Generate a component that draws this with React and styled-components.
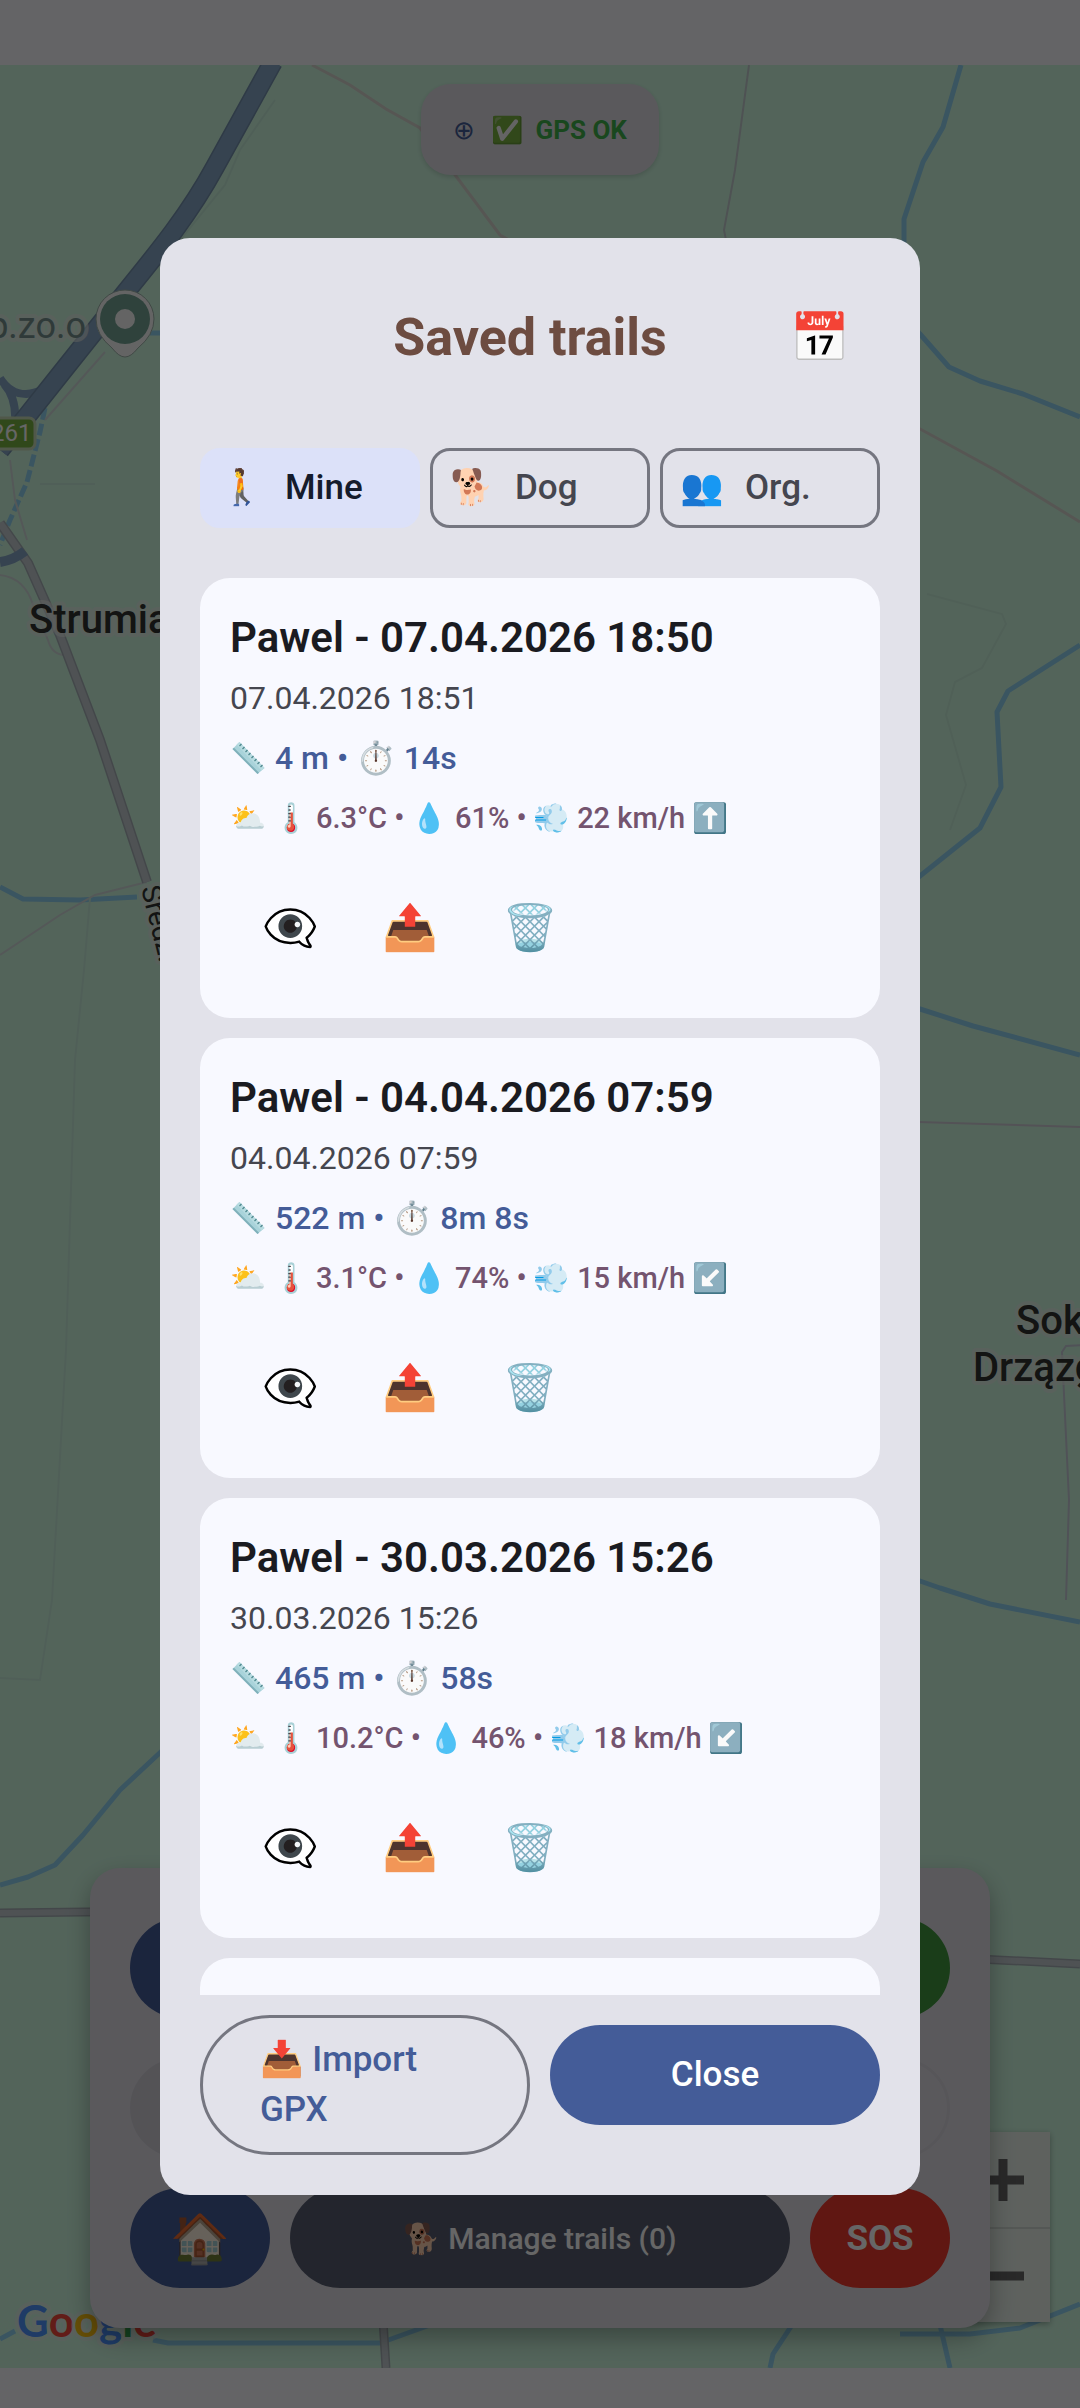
import styled, { createGlobalStyle } from "styled-components";
import { useState } from "react";

const FILTERS = [
  { id: "mine", icon: "🚶", label: "Mine" },
  { id: "dog", icon: "🐕", label: "Dog" },
  { id: "org", icon: "👥", label: "Org." },
];

const TRAILS = [
  {
    name: "Pawel - 07.04.2026 18:50",
    date: "07.04.2026 18:51",
    distance: "4 m",
    time: "14s",
    temp: "6.3°C",
    humidity: "61%",
    wind: "22 km/h",
    arrow: "⬆️",
  },
  {
    name: "Pawel - 04.04.2026 07:59",
    date: "04.04.2026 07:59",
    distance: "522 m",
    time: "8m 8s",
    temp: "3.1°C",
    humidity: "74%",
    wind: "15 km/h",
    arrow: "↙️",
  },
  {
    name: "Pawel - 30.03.2026 15:26",
    date: "30.03.2026 15:26",
    distance: "465 m",
    time: "58s",
    temp: "10.2°C",
    humidity: "46%",
    wind: "18 km/h",
    arrow: "↙️",
  },
];

function App() {
  const [filter, setFilter] = useState("mine");

  return (
    <Screen>
      <GlobalStyle />

      <Background inert>
        <MapArea>
          <MapDrawing />
          <ZoomControl>
            <ZoomButton><ZoomSign /></ZoomButton>
            <ZoomButton><ZoomSign minus /></ZoomButton>
          </ZoomControl>
          <GpsPill>
            <GpsTarget>⊕</GpsTarget>
            <span>✅</span>
            <span>GPS OK</span>
          </GpsPill>
          <ControlPanel>
            <ControlRow $first>
              <ControlButton $grow $bg="#445c98" />
              <ControlButton $grow $bg="#41983f" />
            </ControlRow>
            <ControlRow>
              <ControlButton $grow $bg="#d2d0d8" />
              <ControlButton $grow $bg="transparent" $line="#d9d7df" />
            </ControlRow>
            <ControlRow>
              <ControlButton $bg="#445c98" $size="48px">🏠</ControlButton>
              <ControlButton $grow $bg="#585e71">🐕 Manage trails (0)</ControlButton>
              <ControlButton $bg="#f03a2e" $size="35px" $bold>SOS</ControlButton>
            </ControlRow>
          </ControlPanel>
        </MapArea>
      </Background>

      <Scrim>
        <Dialog role="dialog" aria-labelledby="saved-title">
          <Header>
            <HeaderSpacer />
            <Title id="saved-title">Saved trails</Title>
            <IconButton $size="48px">📅</IconButton>
          </Header>

          <Filters>
            {FILTERS.map((f) => (
              <Chip
                key={f.id}
                type="button"
                aria-pressed={filter === f.id}
                $selected={filter === f.id}
                onClick={() => setFilter(f.id)}
              >
                <ChipIcon>{f.icon}</ChipIcon>
                {f.label}
              </Chip>
            ))}
          </Filters>

          <TrailList>
            {TRAILS.map((t) => (
              <TrailCard key={t.name}>
                <TrailName>{t.name}</TrailName>
                <TrailDate>{t.date}</TrailDate>
                <TrailStats>
                  <Ruler /> {t.distance} • ⏱️ {t.time}
                </TrailStats>
                <TrailWeather>
                  <WeatherIcon>⛅</WeatherIcon>
                  <WeatherIcon>🌡️</WeatherIcon>
                  {t.temp} • 💧 {t.humidity} • 💨 {t.wind} {t.arrow}
                </TrailWeather>
                <Actions>
                  <IconButton>👁️‍🗨️</IconButton>
                  <IconButton>📤</IconButton>
                  <IconButton>🗑️</IconButton>
                </Actions>
              </TrailCard>
            ))}
            <TrailCard />
          </TrailList>

          <Footer>
            <ImportButton>📥 Import GPX</ImportButton>
            <CloseButton>Close</CloseButton>
          </Footer>
        </Dialog>
      </Scrim>
    </Screen>
  );
}

// pale glass ruler, lies from top left to bottom right
function Ruler() {
  return (
    <RulerSvg viewBox="0 0 34 34" aria-hidden="true">
      <path d="M8 1 L33 27 L26 33 L1 8 Z" fill="#a9d3da" />
      <path d="M8 1 L33 27 L30 29.5 L5 3.5 Z" fill="#b8dce1" />
      <path d="M1 8 L26 33 L27.5 31.8 L2.5 6.8 Z" fill="#7fb0ba" />
      <path
        d="M10 3 l-2 2 M13 6 l-2 2 M16 9 l-2 2 M19 12 l-2 2 M22 15 l-2 2 M25 18 l-2 2 M28 21 l-2 2 M31 24 l-2 2"
        stroke="#4a858c"
        strokeWidth="1.2"
      />
    </RulerSvg>
  );
}

function ZoomSign({ minus }) {
  return (
    <svg width="42" height="42" viewBox="0 0 42 42" aria-hidden="true">
      <path d={minus ? "M0 21 H42" : "M0 21 H42 M21 0 V42"} stroke="#666" strokeWidth="9" />
    </svg>
  );
}

function MapDrawing() {
  return (
    <MapSvg viewBox="0 65 1080 2303" preserveAspectRatio="xMidYMid slice">
      <rect x="0" y="65" width="1080" height="2303" fill="#d0fae2" />

      <g fill="none" stroke="#92d4f2" strokeWidth="5" strokeLinejoin="round">
        <path d="M961 65 L943 127 L923 162 L904 219 V245" />
        <path d="M900 310 L920 334 L949 367 L980 381 L1023 394 L1080 417" />
        <path d="M1080 645 L1008 691 L997 712 L1001 787 L980 828 L910 884" />
        <path d="M900 1004 L920 1009 L973 1026 L1080 1055" />
        <path d="M900 1574 L940 1588 L990 1604 L1080 1622" />
        <path d="M0 887 L23 899 L80 900 L137 897" />
        <path d="M45 408 L40 432 L27 482 L10 520 L0 545" strokeDasharray="12 4" />
        <path d="M150 333 H165" />
        <path d="M0 1885 L28 1877 L55 1865 L83 1835 L120 1790 L165 1748" />
        <path d="M0 2339 L15 2331" />
        <path d="M153 2340 L168 2343 H380 L430 2325" />
        <path d="M792 2325 L773 2354 L770 2368" />
        <path d="M940 2325 L950 2368" />
        <path d="M900 2334 H970 L1020 2328 L1080 2304" />
      </g>

      <g fill="none" stroke="#d2dcdc" strokeWidth="2">
        <path d="M312 65 L350 85 L386 109 L420 128 L500 235 L600 290" stroke="#d8d6d0" strokeWidth="3" />
        <path d="M900 418 L997 471 L1080 522" stroke="#d8d6d0" strokeWidth="3" />
        <path d="M749 65 L735 170 L724 230 L727 245" stroke="#c4ccd0" />
        <path d="M918 1122 L1080 1127" stroke="#cfcdd6" />
        <path d="M1085 1345 L1066 1346 L1062 1352 L1069 1500 L1066 1600" stroke="#c9ccda" />
        <path d="M0 955 L60 915 L95 895 L147 882" />
        <path d="M0 575 Q25 578 33 605 L48 640 Q52 655 65 655" />
        <path d="M105 352 L45 420" />
        <path d="M275 100 L240 150 L225 185 L180 240" stroke="#c6eeda" />
        <path d="M90 898 L84 970 L75 1060 L66 1350 L52 1600 L40 1680 L0 1678" stroke="#c8eedc" />
        <path d="M927 594 L1002 614 L1006 624 L982 668 L955 682 L946 715 L966 785 L950 830" stroke="#c8f0da" />
        <path d="M10 460 L15 500 L27 540" />
        <path d="M40 484 H95" stroke="#c8eedc" />
      </g>

      <g fill="none" strokeLinejoin="round">
        <path d="M0 523 L28 563 L60 635 L100 740 L147 882" stroke="#a9b2b8" strokeWidth="10" />
        <path d="M0 523 L28 563 L60 635 L100 740 L147 882" stroke="#c5ced3" strokeWidth="7" />
        <path d="M0 1913 L170 1911" stroke="#a9b2b8" strokeWidth="9" />
        <path d="M0 1913 L170 1911" stroke="#c5ced3" strokeWidth="6" />
        <path d="M900 1955 L1080 1964" stroke="#a9b2b8" strokeWidth="9" />
        <path d="M900 1955 L1080 1964" stroke="#c5ced3" strokeWidth="6" />
        <path d="M383 2320 L386 2368" stroke="#a9b2b8" strokeWidth="9" />
        <path d="M383 2320 L386 2368" stroke="#c5ced3" strokeWidth="6" />
        <path d="M0 378 Q10 394 26 394 Q45 393 58 376 M4 384 Q17 398 15 425" stroke="#87a8c8" strokeWidth="8" />
        <path d="M0 562 Q14 560 25 551" stroke="#87a8c8" strokeWidth="10" />
        <path
          d="M273 62 L215 167 C190 213 160 250 125 293 L62 372 L0 450"
          stroke="#7592ae"
          strokeWidth="20"
        />
        <path
          d="M273 62 L215 167 C190 213 160 250 125 293 L62 372 L0 450"
          stroke="#87a8c8"
          strokeWidth="17"
        />
      </g>

      <PlaceLabel x="86" y="338" textAnchor="end" $size="36px" $color="#75928f" $weight="400">
        p.zo.o
      </PlaceLabel>
      <path
        d="M125 357 Q119 357 112 348 Q96 335 96 319 A29 29 0 0 1 154 319 Q154 335 138 348 Q131 357 125 357 Z"
        fill="#fbfbfb"
        stroke="#9fb5ab"
        strokeWidth="1"
      />
      <circle cx="125" cy="319" r="25" fill="#75a596" />
      <circle cx="125" cy="319" r="10" fill="#fbfbfb" />

      <rect x="-20" y="418" width="55" height="31" rx="6" fill="#78b441" stroke="#c9dcb9" strokeWidth="3" />
      <BadgeText x="-9" y="441">261</BadgeText>

      <PlaceLabel x="29" y="633" $size="40px">Strumia</PlaceLabel>
      <PlaceLabel transform="translate(141 888) rotate(76)" $size="28px" $weight="400">
        Średz.
      </PlaceLabel>
      <PlaceLabel x="1016" y="1334" $size="40px">Sok</PlaceLabel>
      <PlaceLabel x="973" y="1381" $size="40px">Drzązg</PlaceLabel>

      <LogoText x="17" y="2337">
        <tspan fill="#4e94ff">G</tspan>
        <tspan fill="#f4483c">o</tspan>
        <tspan fill="#fbc010">o</tspan>
        <tspan fill="#4e94ff">g</tspan>
        <tspan fill="#34a853">l</tspan>
        <tspan fill="#f4483c">e</tspan>
      </LogoText>
    </MapSvg>
  );
}

const GlobalStyle = createGlobalStyle`
  * {
    box-sizing: border-box;
  }
  body {
    margin: 0;
    font-family: Roboto, "Noto Color Emoji", sans-serif;
    background-color: #fafaff;
  }
  button {
    font-family: inherit;
    border: none;
    margin: 0;
    padding: 0;
    cursor: pointer;
  }
`;

const Screen = styled.div`
  height: 100vh;
  overflow: hidden;
`;

const Background = styled.div`
  height: 100%;
  padding: 65px 0 40px;
  background-color: #fafaff;
`;

const MapArea = styled.main`
  position: relative;
  height: 100%;
  overflow: hidden;
  display: flex;
  flex-direction: column;
  justify-content: space-between;
  align-items: center;
  padding: 19px 90px 40px;
`;

const MapSvg = styled.svg`
  position: absolute;
  inset: 0;
  width: 100%;
  height: 100%;
`;

const PlaceLabel = styled.text`
  font-family: Roboto, sans-serif;
  font-size: ${(p) => p.$size};
  font-weight: ${(p) => p.$weight || 500};
  fill: ${(p) => p.$color || "#303330"};
  stroke: #e8eeea;
  stroke-width: 8px;
  stroke-linejoin: round;
  stroke-opacity: 0.6;
  paint-order: stroke;
`;

const BadgeText = styled.text`
  font-family: Roboto, sans-serif;
  font-size: 24px;
  fill: #fff;
`;

const LogoText = styled.text`
  font-family: Lato, sans-serif;
  font-size: 44px;
  font-weight: 700;
  stroke: #e6efe9;
  stroke-width: 8px;
  stroke-linejoin: round;
  stroke-opacity: 0.6;
  paint-order: stroke;
`;

const GpsPill = styled.div`
  position: relative;
  display: flex;
  align-items: center;
  gap: 12px;
  height: 91px;
  padding: 0 32px;
  border-radius: 30px;
  background-color: #e1dfe7;
  box-shadow: 0 2px 5px rgba(0, 0, 0, 0.15);
  color: #3fb24b;
  font-size: 26px;
  font-weight: 700;
`;

const GpsTarget = styled.span`
  color: #445c98;
  font-weight: 400;
  margin-right: 4px;
`;

const ZoomControl = styled.div`
  position: absolute;
  right: 30px;
  bottom: 46px;
  display: flex;
  flex-direction: column;
  box-shadow: 0 2px 6px rgba(0, 0, 0, 0.3);
`;

const ZoomButton = styled.button`
  display: flex;
  justify-content: center;
  align-items: center;
  width: 95px;
  height: 95px;
  background-color: #eaf3ec;

  & + & {
    border-top: 2px solid #d2dad4;
  }
`;

const ControlPanel = styled.section`
  position: relative;
  width: 100%;
  display: flex;
  flex-direction: column;
  gap: 30px;
  padding: 50px 40px 40px;
  border-radius: 30px;
  background-color: #e1dfe7;
  box-shadow: 0 10px 24px rgba(0, 0, 0, 0.3);
`;

const ControlRow = styled.div`
  display: flex;
  gap: 20px;
  margin-bottom: ${(p) => (p.$first ? "10px" : "0")};
`;

const ControlButton = styled.button`
  flex: ${(p) => (p.$grow ? "1" : "0 0 140px")};
  height: 100px;
  border-radius: 50px;
  border: ${(p) => (p.$line ? `3px solid ${p.$line}` : "none")};
  background-color: ${(p) => p.$bg};
  color: #fff;
  font-size: ${(p) => p.$size || "30px"};
  font-weight: ${(p) => (p.$bold ? 700 : 500)};
`;

const Scrim = styled.div`
  position: fixed;
  inset: 0;
  display: flex;
  justify-content: center;
  align-items: center;
  padding: 65px 160px 40px;
  background-color: rgba(0, 0, 0, 0.6);
`;

const Dialog = styled.div`
  display: flex;
  flex-direction: column;
  width: 100%;
  max-height: 85%;
  padding: 40px;
  border-radius: 30px;
  background-color: #e2e2ea;
`;

const Header = styled.header`
  display: flex;
  justify-content: space-between;
  align-items: center;
  margin-bottom: 50px;
`;

const HeaderSpacer = styled.div`
  width: 100px;
`;

const Title = styled.h2`
  margin: 0;
  color: #6d4c41;
  font-size: 52px;
  font-weight: 700;
`;

const IconButton = styled.button`
  width: 120px;
  height: 120px;
  background: none;
  font-size: ${(p) => p.$size || "45px"};
  color: #1a1b21;
`;

const Filters = styled.div`
  display: flex;
  gap: 10px;
  margin-bottom: 50px;
`;

const Chip = styled.button`
  flex: 1;
  display: flex;
  align-items: center;
  gap: 20px;
  height: 80px;
  padding: 0 17px;
  border: 3px solid ${(p) => (p.$selected ? "#dce1f9" : "#757680")};
  border-radius: 20px;
  background-color: ${(p) => (p.$selected ? "#dce1f9" : "transparent")};
  color: ${(p) => (p.$selected ? "#151b2c" : "#45464f")};
  font-size: 35px;
  font-weight: 500;
`;

const ChipIcon = styled.span`
  width: 45px;
`;

const TrailList = styled.ul`
  flex: 1;
  min-height: 0;
  overflow-y: auto;
  scrollbar-width: none;
  display: flex;
  flex-direction: column;
  gap: 20px;
  margin: 0;
  padding: 0;
  list-style: none;
`;

const TrailCard = styled.li`
  flex: none;
  min-height: 440px;
  padding: 30px;
  border-radius: 30px;
  background-color: #f8f9ff;
`;

const TrailName = styled.h3`
  margin: 0 0 10px;
  color: #1a1b21;
  font-size: 42px;
  font-weight: 600;
  line-height: 60px;
`;

const TrailLine = styled.p`
  margin: 0 0 20px;
  line-height: 40px;
  white-space: nowrap;
`;

const TrailDate = styled(TrailLine)`
  color: #45464f;
  font-size: 32px;
`;

const TrailStats = styled(TrailLine)`
  color: #445c98;
  font-size: 32px;
  font-weight: 500;
`;

const TrailWeather = styled(TrailLine)`
  margin-bottom: 30px;
  color: #74546f;
  font-size: 29px;
  font-weight: 500;
`;

const WeatherIcon = styled.span`
  display: inline-block;
  width: 43px;
`;

const RulerSvg = styled.svg`
  width: 37px;
  height: 34px;
  vertical-align: -6px;
`;

const Actions = styled.div`
  display: flex;
`;

const Footer = styled.footer`
  display: flex;
  align-items: flex-start;
  gap: 20px;
  margin-top: 20px;
`;

const FooterButton = styled.button`
  flex: 1;
  font-size: 35px;
  font-weight: 500;
  line-height: 50px;
`;

const ImportButton = styled(FooterButton)`
  padding: 17px 57px;
  border: 3px solid #757680;
  border-radius: 70px;
  background: none;
  color: #445c98;
  text-align: left;
`;

const CloseButton = styled(FooterButton)`
  margin-top: 10px;
  padding: 25px 60px;
  border-radius: 50px;
  background-color: #445c98;
  color: #fff;
`;

export default App;
